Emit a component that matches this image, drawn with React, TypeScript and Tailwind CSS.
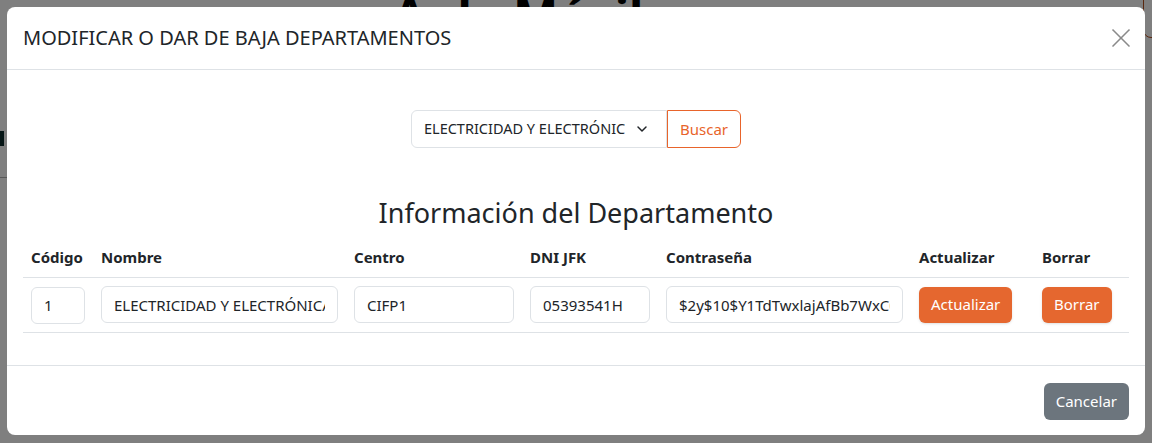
import { ChevronDown, X } from 'lucide-react';

const font = { fontFamily: '"Noto Sans", "Open Sans", sans-serif' };

const columns = [
  { label: 'Código', width: 'w-[70px]' },
  { label: 'Nombre', width: 'w-[253px]' },
  { label: 'Centro', width: 'w-[176px]' },
  { label: 'DNI JFK', width: 'w-[136px]' },
  { label: 'Contraseña', width: 'w-[253px]' },
  { label: 'Actualizar', width: 'w-[123px]' },
  { label: 'Borrar', width: 'w-[95px]' },
];

function Field({ value, className }: { value: string; className: string }) {
  return (
    <input
      readOnly
      value={value}
      className={`h-[37px] rounded-md border border-[#dee2e6] bg-white px-3 text-[15px] text-[#212529] outline-none ${className}`}
    />
  );
}

export default function App() {
  return (
    <div className="relative h-[443px] w-[1152px] overflow-hidden bg-white text-[#212529]" style={font}>
      {/* page behind the modal */}
      <div className="absolute left-[393px] top-[-8px] text-[48px] leading-none font-bold text-black">Aula Móvil</div>
      <div className="absolute left-[1143px] top-[-20px] h-[58px] w-[60px] rounded-lg border border-[#b5501f]" />
      <div className="absolute left-0 top-[131px] h-[15px] w-[4px] bg-[#0b2a2a]" />
      <div className="absolute left-0 top-[177px] h-px w-[8px] bg-[#b0b0b0]" />

      {/* overlay */}
      <div className="absolute inset-0 flex justify-center bg-black/50 pt-[7px]">
        <div className="flex h-[428px] w-[1138px] flex-col rounded-lg bg-white">
          {/* header */}
          <div className="flex h-[63px] items-center justify-between border-b border-[#dee2e6] px-4">
            <h5 className="text-[20px] leading-none text-[#212529]">MODIFICAR O DAR DE BAJA DEPARTAMENTOS</h5>
            <X className="-mr-2 h-8 w-8 text-[#8a8a8a]" strokeWidth={1.25} />
          </div>

          {/* body */}
          <div className="flex flex-col px-4 pt-10">
            <div className="flex justify-center">
              <div className="flex h-[38px]">
                <div className="flex w-[256px] items-center justify-between rounded-l-md border border-[#dee2e6] pl-3 pr-4 text-[14.5px] text-[#212529]">
                  <span className="overflow-hidden whitespace-nowrap">ELECTRICIDAD Y ELECTRÓNIC</span>
                  <ChevronDown className="ml-2 h-4 w-4 shrink-0" strokeWidth={2.2} />
                </div>
                <button className="rounded-r-md border border-[#e8642b] px-3 text-[15px] text-[#e8642b]">Buscar</button>
              </div>
            </div>

            <h3 className="mt-12 mb-2 text-center text-[27px] leading-[33px] text-[#212529]">Información del Departamento</h3>

            <table className="mb-4 w-full border-collapse text-left">
              <thead>
                <tr className="border-b border-[#dee2e6]">
                  {columns.map((c) => (
                    <th key={c.label} className={`${c.width} h-10 px-2 text-[15px] font-bold`}>
                      {c.label}
                    </th>
                  ))}
                </tr>
              </thead>
              <tbody>
                <tr className="border-b border-[#dee2e6]">
                  <td className="px-2 pt-[9px] pb-2">
                    <Field value="1" className="w-[54px]" />
                  </td>
                  <td className="px-2">
                    <Field value="ELECTRICIDAD Y ELECTRÓNICA" className="w-[237px]" />
                  </td>
                  <td className="px-2">
                    <Field value="CIFP1" className="w-[160px]" />
                  </td>
                  <td className="px-2">
                    <Field value="05393541H" className="w-[120px]" />
                  </td>
                  <td className="px-2">
                    <Field value="$2y$10$Y1TdTwxlajAfBb7WxC0" className="w-[237px]" />
                  </td>
                  <td className="px-2">
                    <button className="h-[36px] rounded-md bg-[#e5672f] px-3 text-[15px] text-white shadow-sm">Actualizar</button>
                  </td>
                  <td className="px-2">
                    <button className="h-[36px] rounded-md bg-[#e5672f] px-3 text-[15px] text-white shadow-sm">Borrar</button>
                  </td>
                </tr>
              </tbody>
            </table>
          </div>

          {/* footer */}
          <div className="mt-auto flex h-[70px] items-center justify-end border-t border-[#dee2e6] px-4">
            <button className="mt-[1px] h-[37px] rounded-md bg-[#6c757d] px-3 text-[15px] text-white">Cancelar</button>
          </div>
        </div>
      </div>
    </div>
  );
}
